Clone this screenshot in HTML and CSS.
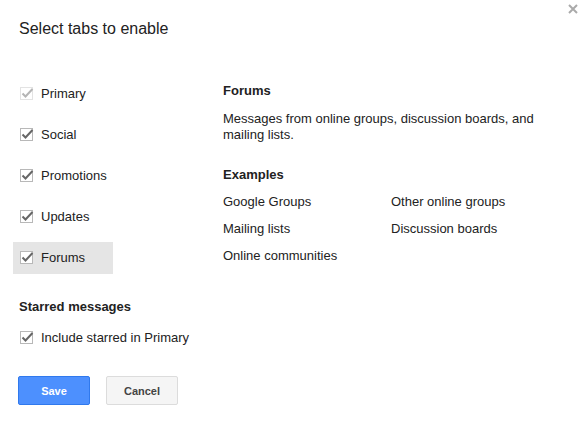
FILE: index.html
```html
<!DOCTYPE html>
<html>
<head>
<meta charset="utf-8">
<link rel="stylesheet" href="styles.css">
</head>
<body>
<div class="dialog">
  <button class="close" aria-label="Close">
    <svg width="10" height="10" viewBox="0 0 10 10"><path d="M1 1L9 9M9 1L1 9" stroke="#aaa" stroke-width="2"/></svg>
  </button>
  <h1 class="title">Select tabs to enable</h1>
  <div class="main">
    <div class="tabs">
      <div class="row disabled"><span class="cb"><svg width="15" height="15" viewBox="0 0 15 15"><rect x="0.5" y="1.5" width="12" height="12" fill="#fff" stroke="#e3e3e3"/><path d="M2.5 7.5L5.5 10.5L12.5 3" fill="none" stroke="#b5b5b5" stroke-width="2"/></svg></span>Primary</div>
      <div class="row"><span class="cb"><svg width="15" height="15" viewBox="0 0 15 15"><rect x="0.5" y="1.5" width="12" height="12" fill="#fff" stroke="#b8b8b8"/><path d="M2.5 7.5L5.5 10.5L12.5 3" fill="none" stroke="#666" stroke-width="2"/></svg></span>Social</div>
      <div class="row"><span class="cb"><svg width="15" height="15" viewBox="0 0 15 15"><rect x="0.5" y="1.5" width="12" height="12" fill="#fff" stroke="#b8b8b8"/><path d="M2.5 7.5L5.5 10.5L12.5 3" fill="none" stroke="#666" stroke-width="2"/></svg></span>Promotions</div>
      <div class="row"><span class="cb"><svg width="15" height="15" viewBox="0 0 15 15"><rect x="0.5" y="1.5" width="12" height="12" fill="#fff" stroke="#b8b8b8"/><path d="M2.5 7.5L5.5 10.5L12.5 3" fill="none" stroke="#666" stroke-width="2"/></svg></span>Updates</div>
      <div class="row selected"><span class="cb"><svg width="15" height="15" viewBox="0 0 15 15"><rect x="0.5" y="1.5" width="12" height="12" fill="#fff" stroke="#b8b8b8"/><path d="M2.5 7.5L5.5 10.5L12.5 3" fill="none" stroke="#666" stroke-width="2"/></svg></span>Forums</div>
    </div>
    <div class="detail">
      <h2 class="heading">Forums</h2>
      <p class="desc">Messages from online groups, discussion boards, and mailing lists.</p>
      <h2 class="heading examples-h">Examples</h2>
      <div class="examples">
        <span>Google Groups</span><span>Other online groups</span>
        <span>Mailing lists</span><span>Discussion boards</span>
        <span>Online communities</span>
      </div>
    </div>
  </div>
  <h2 class="heading starred-h">Starred messages</h2>
  <div class="row starred"><span class="cb"><svg width="15" height="15" viewBox="0 0 15 15"><rect x="0.5" y="1.5" width="12" height="12" fill="#fff" stroke="#b8b8b8"/><path d="M2.5 7.5L5.5 10.5L12.5 3" fill="none" stroke="#666" stroke-width="2"/></svg></span>Include starred in Primary</div>
  <div class="buttons">
    <button class="btn save">Save</button>
    <button class="btn cancel">Cancel</button>
  </div>
</div>
</body>
</html>
```

FILE: styles.css
```css
html, body {
  margin: 0;
  padding: 0;
  background: #fff;
}
body {
  font-family: "Liberation Sans", Arial, sans-serif;
  font-size: 13px;
  color: #222;
}
.dialog {
  position: relative;
  width: 579px;
  height: 421px;
  box-sizing: border-box;
  padding: 20px 0 0 0;
}
.close {
  position: absolute;
  top: 4px;
  right: 1px;
  border: 0;
  background: none;
  padding: 0;
  width: 10px;
  height: 10px;
  display: block;
}
.close svg { display: block; }
.title {
  margin: 0 0 40px 19px;
  font-size: 16px;
  font-weight: normal;
  line-height: 18px;
  color: #222;
}
.main {
  display: flex;
  align-items: flex-start;
}
.tabs {
  margin-left: 13px;
  width: 100px;
  display: flex;
  flex-direction: column;
  gap: 9px;
}
.row {
  height: 32px;
  display: flex;
  align-items: center;
  padding-left: 7px;
  line-height: 16px;
  color: #222;
}
.row.selected { background: #e5e5e5; }
.cb {
  width: 15px;
  height: 15px;
  margin-right: 6px;
  margin-top: -2px;
  display: block;
}
.cb svg { display: block; }
.detail {
  margin-left: 110px;
  padding-top: 5px;
  width: 315px;
}
.heading {
  margin: 0;
  font-size: 13px;
  font-weight: bold;
  line-height: 16px;
  color: #222;
}
.desc {
  margin: 12px 0 0;
  line-height: 16px;
}
.examples-h { margin-top: 24px; }
.examples {
  margin-top: 11px;
  display: grid;
  grid-template-columns: 168px auto;
  row-gap: 11px;
  line-height: 16px;
}
.starred-h {
  margin: 25px 0 0 19px;
}
.row.starred {
  margin: 7px 0 0 13px;
}
.buttons {
  margin: 22px 0 0 18px;
  display: flex;
  gap: 16px;
}
.btn {
  width: 72px;
  height: 29px;
  box-sizing: border-box;
  border-radius: 2px;
  font-family: "Liberation Sans", Arial, sans-serif;
  font-size: 11px;
  font-weight: bold;
  padding: 0;
}
.save {
  background: #4d90fe;
  border: 1px solid #3079ed;
  color: #fff;
}
.cancel {
  background: #f5f5f5;
  border: 1px solid #dcdcdc;
  color: #444;
}
```
